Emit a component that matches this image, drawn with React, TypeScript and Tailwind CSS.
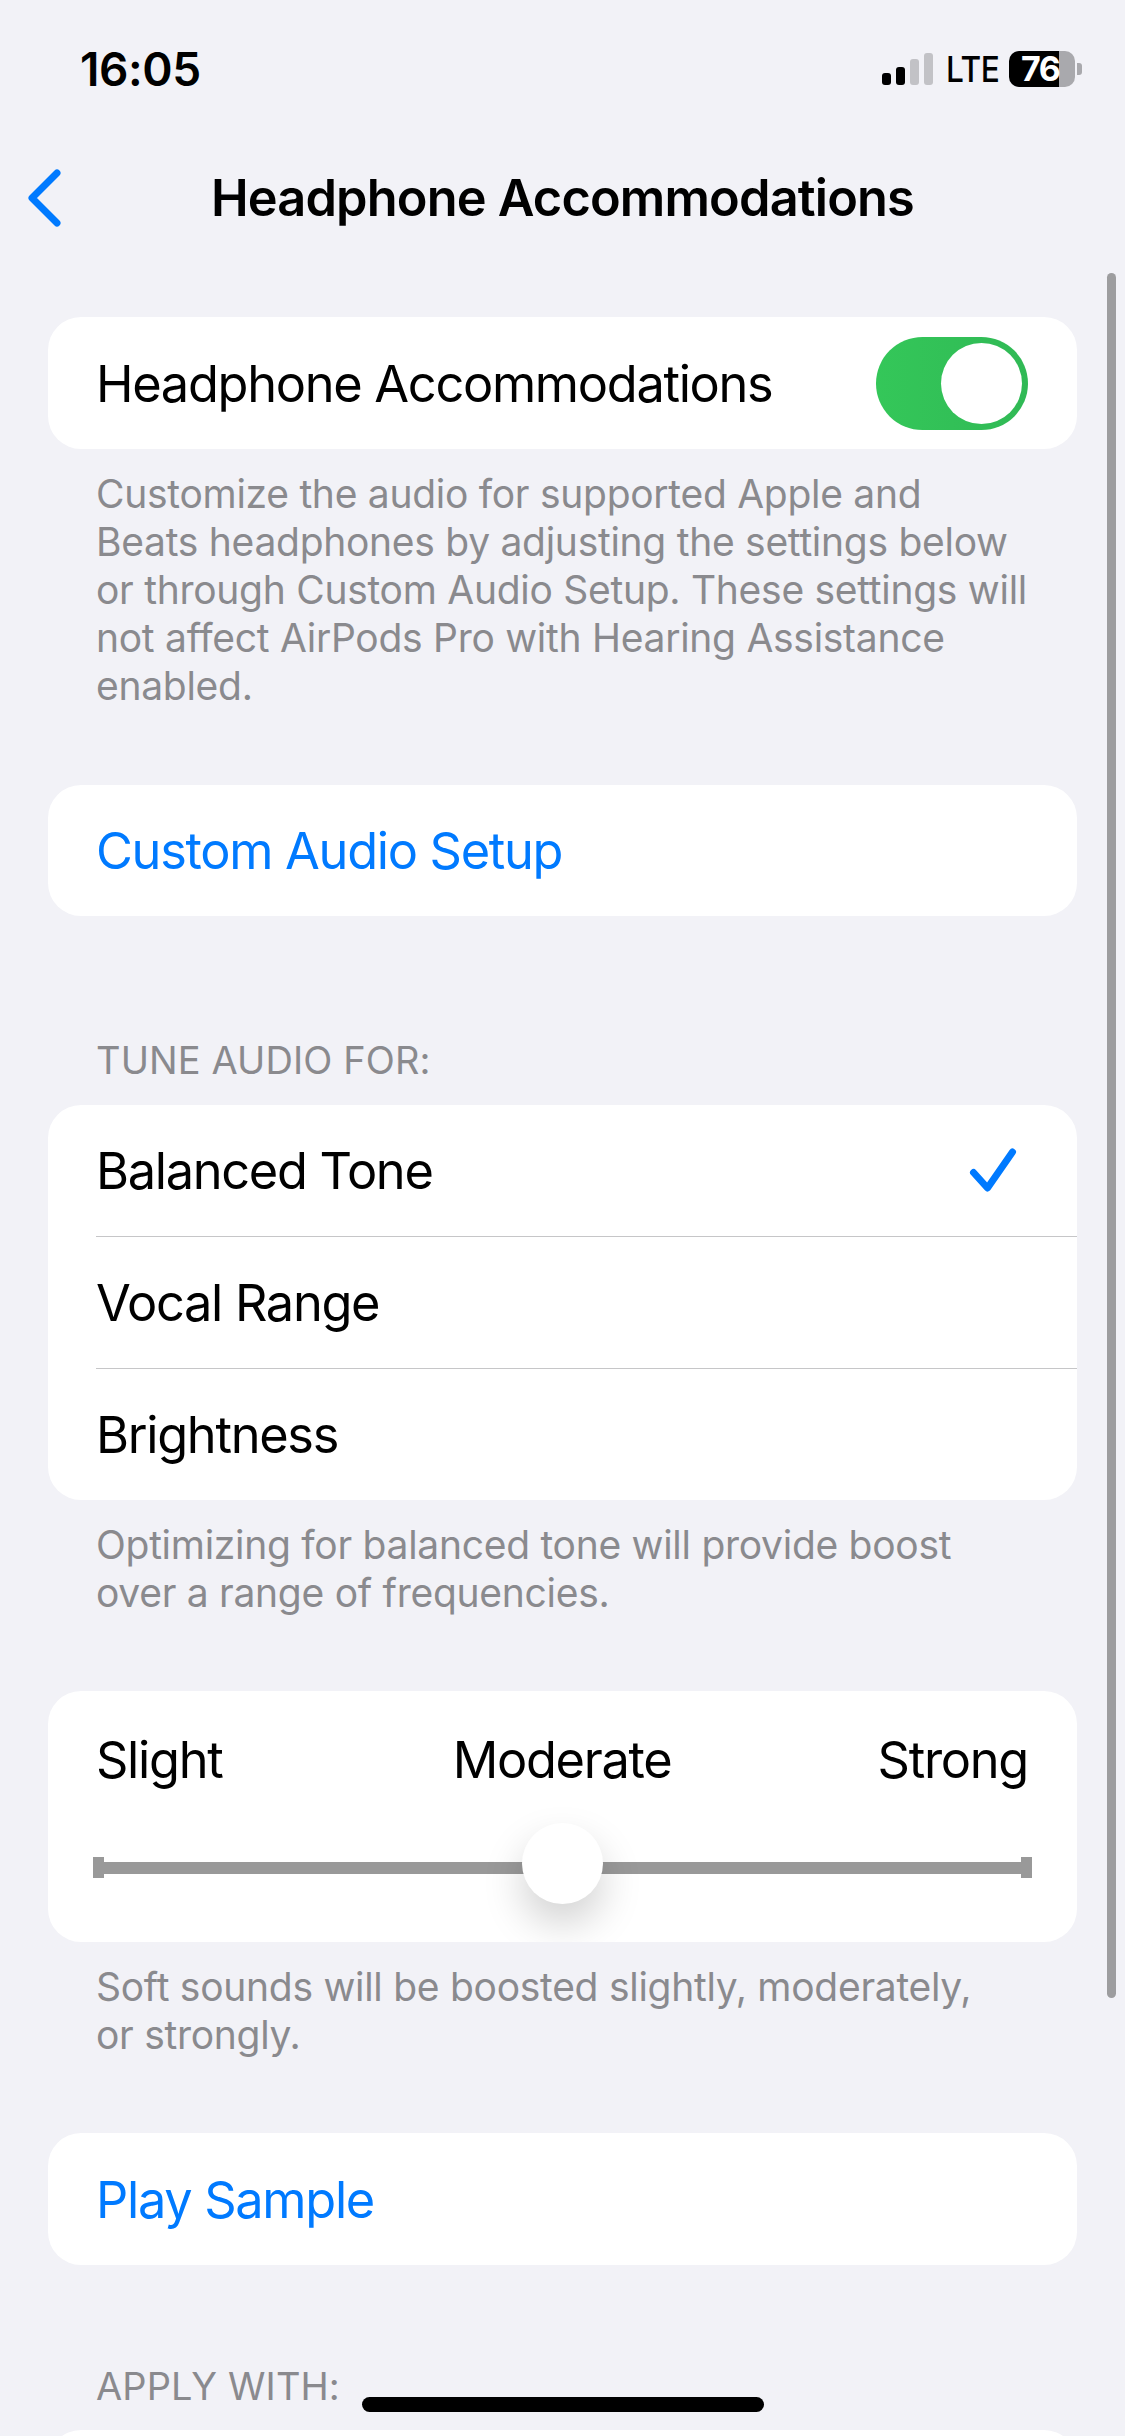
import React from 'react';

const Card: React.FC<{ children: React.ReactNode; className?: string }> = ({ children, className = '' }) => (
  <div className={`mx-[48px] rounded-[33px] bg-white ${className}`}>{children}</div>
);

const Row: React.FC<{ label: string; accessory?: React.ReactNode; blue?: boolean; className?: string }> = ({
  label,
  accessory,
  blue,
  className = 'h-[132px]',
}) => (
  <div className={`flex items-center pl-[48px] pr-[49px] text-[50.5px] leading-none tracking-[-1.3px] ${blue ? 'text-[#007aff]' : 'text-black'} ${className}`}>
    <span className="flex-1 pt-[2px]">{label}</span>
    {accessory}
  </div>
);

const Footnote: React.FC<{ children: React.ReactNode }> = ({ children }) => (
  <p className="ml-[96px] mr-[80px] whitespace-nowrap pt-[21px] text-[39px] leading-[48px] tracking-[-0.28px] text-[#8a8a8e]">{children}</p>
);

const SectionHeader: React.FC<{ children: React.ReactNode; className?: string }> = ({ children, className = '' }) => (
  <p className={`mx-[96px] text-[38px] leading-[48px] tracking-[0.1px] text-[#8a8a8e] ${className}`}>{children}</p>
);

const StatusBar = () => (
  <div className="flex h-[132px] items-start justify-between pl-[80px] pr-[43px] pt-[46px]">
    <span className="text-[46px] font-semibold leading-[46px] tracking-[-0.4px] text-black">16:05</span>
    <div className="flex items-center pt-[5px]">
      <div className="flex h-[32px] items-end gap-[5px]">
        <div className="h-[12px] w-[9px] rounded-[3px] bg-black" />
        <div className="h-[18px] w-[9px] rounded-[3px] bg-black" />
        <div className="h-[26px] w-[9px] rounded-[3px] bg-[#c2c2c6]" />
        <div className="h-[32px] w-[9px] rounded-[3px] bg-[#c2c2c6]" />
      </div>
      <span className="ml-[13px] w-[51px] origin-left scale-x-[0.88] whitespace-nowrap text-[36px] font-medium leading-none tracking-[-0.5px] text-black">LTE</span>
      <div className="relative ml-[12px] flex h-[36px] w-[66px]">
        <div className="w-[50px] rounded-l-[10px] bg-black" />
        <div className="flex-1 rounded-r-[10px] bg-[#a9a9ad]" />
        <span className="absolute inset-y-0 left-[12px] flex items-center text-[34px] font-bold leading-none tracking-[-1.5px] text-white">76</span>
      </div>
      <div className="ml-[2px] h-[12px] w-[5px] rounded-r-[3px] bg-[#a9a9ad]" />
    </div>
  </div>
);

const NavBar = () => (
  <div className="relative flex h-[132px] items-center justify-center">
    <svg className="absolute left-[24px] top-[36px]" width="40" height="60" viewBox="0 0 40 60" fill="none">
      <path d="M33 5 L8 30 L33 55" stroke="#007aff" strokeWidth="7" strokeLinecap="round" strokeLinejoin="round" />
    </svg>
    <span className="text-[50.5px] font-semibold leading-none tracking-[-0.85px] text-black">Headphone Accommodations</span>
  </div>
);

const Toggle = () => (
  <div className="flex h-[93px] w-[152px] items-center justify-end rounded-full bg-gradient-to-r from-[#34c759] to-[#30b955] pr-[6px]">
    <div className="size-[81px] rounded-full bg-white" />
  </div>
);

const Check = () => (
  <svg className="mr-[11px]" width="48" height="48" viewBox="0 0 48 48" fill="none">
    <path d="M4.5 25.5 L18.5 41 L43.5 5" stroke="#007aff" strokeWidth="7" strokeLinecap="round" strokeLinejoin="round" />
  </svg>
);

const Divider = () => <div className="ml-[48px] h-px bg-[#c6c6c8]" />;

const Slider = () => (
  <div className="relative mt-[74px] flex h-[21px] items-center">
    <div className="h-[21px] w-[11px] bg-[#999999]" />
    <div className="h-[12px] flex-1 bg-[#999999]" />
    <div className="h-[21px] w-[11px] bg-[#999999]" />
    <div className="absolute left-[429px] top-[-34px] size-[81px] rounded-full bg-white shadow-[0_20px_40px_rgba(0,0,0,0.18)]" />
  </div>
);

export default function App() {
  return (
    <div className="relative h-[2436px] w-[1125px] overflow-hidden bg-[#f2f2f7] font-['Inter',sans-serif]">
      <StatusBar />
      <NavBar />

      <Card className="mt-[53px]">
        <Row label="Headphone Accommodations" accessory={<Toggle />} />
      </Card>
      <Footnote>
        Customize the audio for supported Apple and
        <br />
        Beats headphones by adjusting the settings below
        <br />
        or through Custom Audio Setup. These settings will
        <br />
        not affect AirPods Pro with Hearing Assistance
        <br />
        enabled.
      </Footnote>

      <Card className="mt-[75px]">
        <Row blue className="h-[131px]" label="Custom Audio Setup" />
      </Card>

      <SectionHeader className="mt-[120px] mb-[21px]">TUNE AUDIO FOR:</SectionHeader>
      <Card>
        <Row className="h-[131px]" label="Balanced Tone" accessory={<Check />} />
        <Divider />
        <Row className="h-[131px]" label="Vocal Range" />
        <Divider />
        <Row className="h-[131px]" label="Brightness" />
      </Card>
      <Footnote>
        Optimizing for balanced tone will provide boost
        <br />
        over a range of frequencies.
      </Footnote>

      <Card className="mt-[74px] h-[251px] overflow-hidden px-[45px] pt-[46px]">
        <div className="grid grid-cols-3 pl-[3px] pr-[4px] text-[50.5px] leading-[46px] tracking-[-1.3px] text-black">
          <span>Slight</span>
          <span className="text-center">Moderate</span>
          <span className="text-right">Strong</span>
        </div>
        <Slider />
      </Card>
      <Footnote>
        Soft sounds will be boosted slightly, moderately,
        <br />
        or strongly.
      </Footnote>

      <Card className="mt-[74px]">
        <Row blue label="Play Sample" />
      </Card>

      <SectionHeader className="mt-[97px] mb-[20px]">APPLY WITH:</SectionHeader>
      <Card className="h-[132px]">
        <div />
      </Card>

      {/* scroll indicator and home bar sit over the content */}
      <div className="absolute left-[1107px] top-[273px] h-[1725px] w-[9px] rounded-full bg-[#9d9d9f]" />
      <div className="absolute left-[362px] top-[2397px] h-[15px] w-[402px] rounded-full bg-black" />
    </div>
  );
}
